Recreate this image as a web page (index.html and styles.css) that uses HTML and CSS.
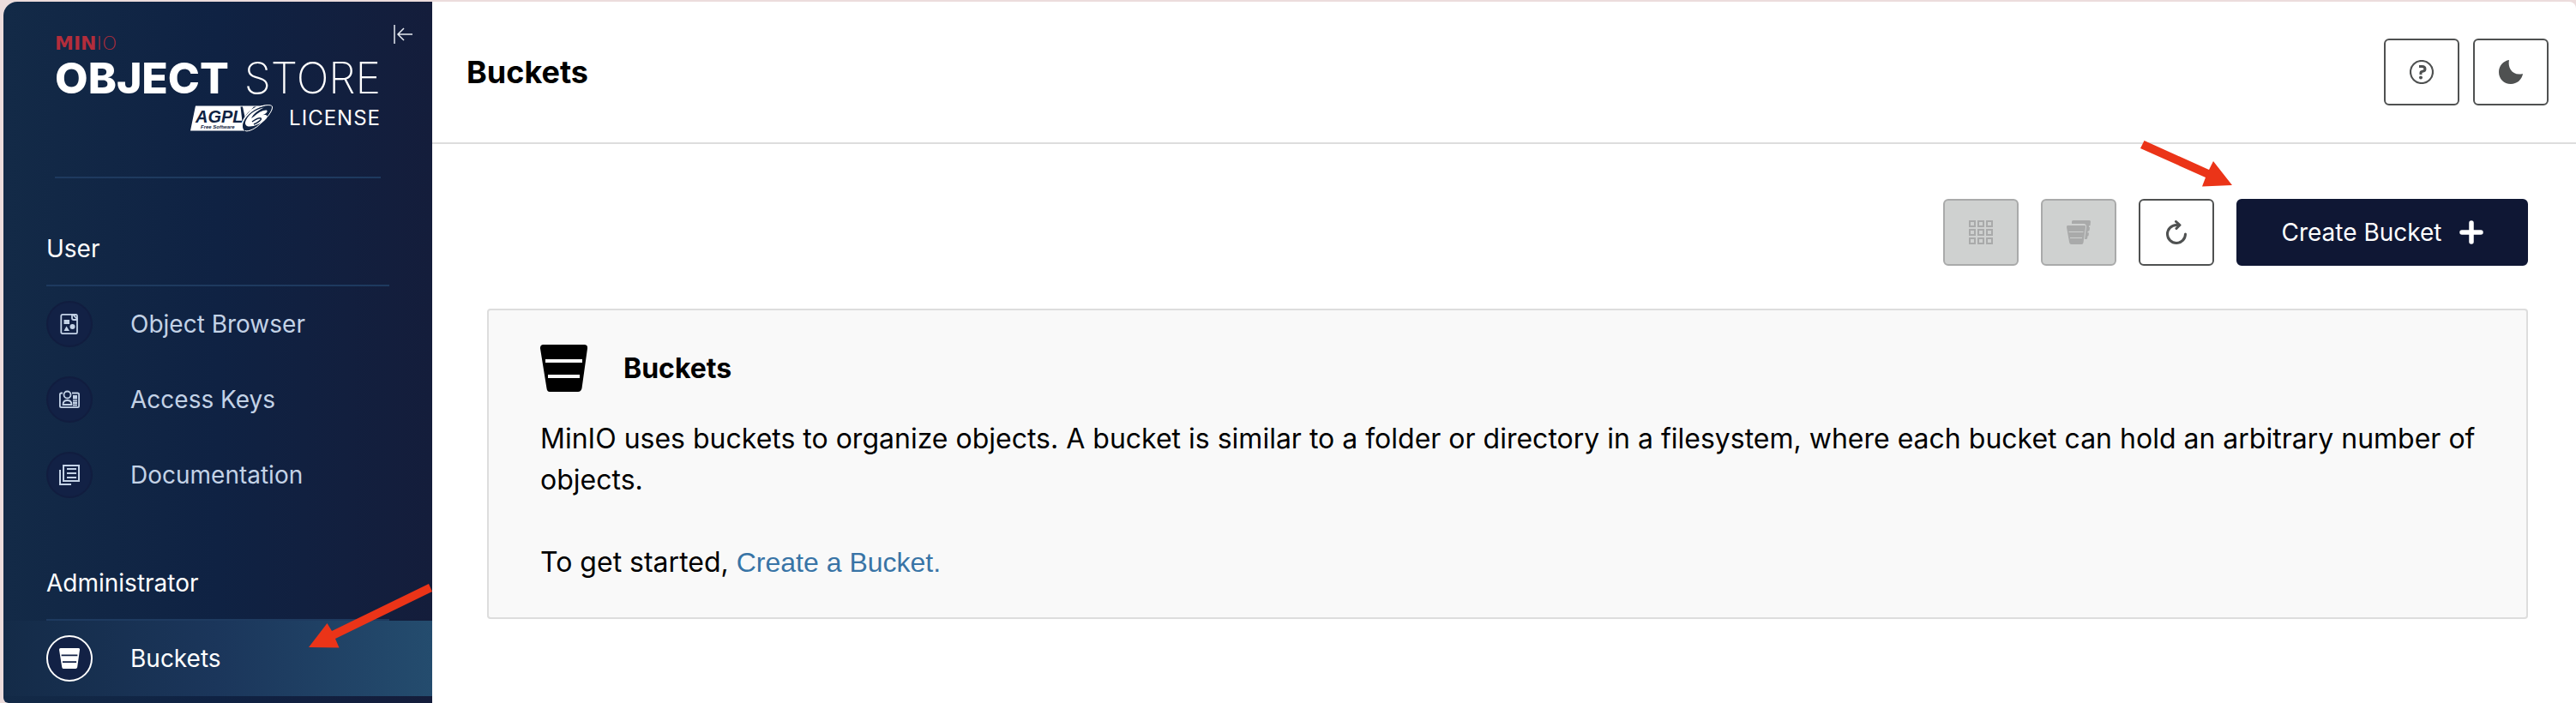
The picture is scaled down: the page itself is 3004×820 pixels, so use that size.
FILE: index.html
```html
<!DOCTYPE html>
<html lang="en">
<head>
    <meta charset="UTF-8">
    <meta name="viewport" content="width=device-width, initial-scale=1.0">
    <title>MinIO Console</title>
    <link rel="stylesheet" href="styles.css">
</head>
<body>

    <svg class="sprite" aria-hidden="true">
        <symbol id="bucket" viewBox="0 0 55 55">
            <path fill="currentColor" fill-rule="evenodd" d="M3.500 0H51.500Q55.500 0 55 4.500L48.500 51Q47.500 55 44 55H11Q8 55 7.500 51L0 4.500Q-.2 0 3.500 0ZM6 17V21H49V17ZM9 35V39H46V35Z"/>
        </symbol>
    </svg>

    <div class="window">
        <aside class="sidebar">
            <button class="collapse" aria-label="Collapse menu">
                <svg width="24" height="24" viewBox="0 0 24 24" fill="none" stroke="currentColor" stroke-width="1.500">
                    <path d="M2 1V23M23 12H6M13 5L6 12L13 19"/>
                </svg>
            </button>

            <div class="logo">
                <div class="logo-brand"><b>MIN</b>IO</div>
                <div class="logo-name"><b>OBJECT</b><span>STORE</span></div>
                <div class="logo-license">
                    <svg width="97" height="32" viewBox="0 0 97 32">
                        <path fill="#fff" d="M6 1.500H82C90 0 96 0 96 3C96 8 89 16 82 22C76 28 68 32 64 31L62 30.500H0Z"/>
                        <path fill="#102343" d="M77 2.500C70 5 63 13 60.500 20L58.500 2.500H61L63.500 14L74 2.500ZM96 3C96 8 89 16 82 22C76 28 68 32 64 31C61 29 60 25 62 20C66 11 76 4 85 2C91 0 96 0 96 3Z"/>
                        <path fill="#fff" d="M65 18C68 11 77 5 86 3.500C80 6 73 11 71 16L74 14C79 9 85 6 89 6.500C91 8 88 11 84 12.500C90 11 91 14 88 17C82 23 71 27 66 25C63 23 64 20 65 18Z"/>
                        <path fill="none" stroke="#102343" stroke-width="1.500" d="M72 20C75 18 80 15 82 16C84 17 79 21 74 23"/>
                        <path fill="none" stroke="#fff" stroke-width="1" d="M82 2C90 0 95.500 0 95.500 3C95.500 8 89 16 82 22C76 28 68 32 64 30.500"/>
                        <text class="agpl" x="6" y="21">AGPL</text>
                        <text class="agpl-sub" x="12" y="28">Free Software</text>
                    </svg>
                    <span>LICENSE</span>
                </div>
            </div>

            <nav>
                <h2 class="nav-title">User</h2>
                <a class="nav-item" href="#">
                    <span class="nav-icon">
                        <svg width="24" height="24" viewBox="0 0 24 24" fill="none" stroke="currentColor" stroke-width="1.800">
                            <path d="M4 .9H16L21 6V21.500Q21 23.100 19.500 23.100H4Q2.300 23.100 2.300 21.500V2.500Q2.300 .9 4 .9Z"/>
                            <path d="M15 1V5Q15 7 17 7H21M16 1H19.500Q21 1 21 3V7"/>
                            <path fill="currentColor" stroke="none" d="M5.500 7H12V12H5.500ZM8.500 14.500L12 20H5.500Z"/>
                            <circle cx="15.500" cy="15" r="3" fill="currentColor" stroke="none"/>
                        </svg>
                    </span>
                    Object Browser
                </a>
                <a class="nav-item" href="#">
                    <span class="nav-icon">
                        <svg width="24" height="24" viewBox="0 0 24 24" fill="none" stroke="currentColor" stroke-width="1.800">
                            <path d="M4 4.500H2.500Q.9 4.500 .9 6V19.500Q.9 21.100 2.500 21.100H21.500Q23.100 21.100 23.100 19.500V6Q23.100 4.500 21.500 4.500H15"/>
                            <circle cx="9.500" cy="6.500" r="4"/>
                            <path d="M4.500 18Q4.500 13 9.500 13Q14.500 13 14.500 18Z"/>
                            <path fill="currentColor" stroke="none" d="M16 7H21V11.500H16Z"/>
                            <path d="M16 13.500H21M16 16H21M16 18.500H21"/>
                        </svg>
                    </span>
                    Access Keys
                </a>
                <a class="nav-item" href="#">
                    <span class="nav-icon">
                        <svg width="24" height="24" viewBox="0 0 24 24" fill="none" stroke="currentColor" stroke-width="2">
                            <rect x="5" y="1" width="18" height="18"/>
                            <path d="M9 5H20M9 10H20M9 15H20M1 6V23H14"/>
                        </svg>
                    </span>
                    Documentation
                </a>

                <h2 class="nav-title">Administrator</h2>
                <a class="nav-item active" href="#">
                    <span class="nav-icon"><svg width="24" height="24"><use href="#bucket"/></svg></span>
                    Buckets
                    <svg class="arrow arrow-menu" width="144" height="76" viewBox="0 0 144 76" aria-hidden="true">
                        <path d="M140 1L144 10L31 65L35.500 75.500L0 75L21.500 47L27 56Z"/>
                    </svg>
                </a>
            </nav>
        </aside>

        <main>
            <header class="page-header">
                <h1>Buckets</h1>
                <div class="header-actions">
                    <button class="btn" aria-label="Help">
                        <svg width="28" height="28" viewBox="0 0 28 28" fill="none" stroke="currentColor">
                            <circle cx="14" cy="14" r="13" stroke-width="2.200"/>
                            <path stroke-width="3" d="M11 7.500H14.500Q18 7.500 18 10.500Q18 13 15 13.200Q13 13.500 13 15V17"/>
                            <circle cx="13" cy="20.500" r="2" fill="currentColor" stroke="none"/>
                        </svg>
                    </button>
                    <button class="btn" aria-label="Dark mode">
                        <svg width="28" height="28" viewBox="0 0 28 28" fill="currentColor">
                            <path d="M12 0C10 9 16 19 28 16C27 23 21 28 14 28C6 28 0 22 0 14C0 7 5 1 12 0Z"/>
                        </svg>
                    </button>
                </div>
            </header>

            <section class="content">
                <div class="toolbar">
                    <button class="btn" aria-label="Select all" disabled>
                        <svg width="28" height="28" viewBox="0 0 28 28" fill="none" stroke="currentColor" stroke-width="2">
                            <path d="M1 1H7V7H1ZM11 1H17V7H11ZM21 1H27V7H21ZM1 11H7V17H1ZM11 11H17V17H11ZM21 11H27V17H21ZM1 21H7V27H1ZM11 21H17V27H11ZM21 21H27V27H21Z"/>
                        </svg>
                    </button>
                    <button class="btn" aria-label="Set replication" disabled>
                        <svg width="28" height="28" viewBox="0 0 28 28" fill="currentColor">
                            <path fill-rule="evenodd" d="M1 6H21Q22.500 6 22 8L19.500 26Q19.200 28 17.500 28H5.500Q3.500 28 3.200 26L0 8Q0 6 1 6ZM2.500 13V14H19.500V13ZM4 20V21H18V20Z"/>
                            <path d="M6 1.500Q6 0 7.500 0H26.500Q28 0 28 1.500L27.500 6L26 6.500V8H27L26.500 12L24.500 13V14.500H26L25.500 18L24 19L24.500 20L23.500 22H21L23 8Q23 4 20 4H6Z"/>
                        </svg>
                    </button>
                    <button class="btn" aria-label="Refresh">
                        <svg width="28" height="28" viewBox="0 0 28 28" fill="none" stroke="currentColor" stroke-width="3" stroke-linecap="round" stroke-linejoin="round">
                            <path d="M24.500 16A10.500 10.500 0 1 1 14 5.500H17M13.500 1.500L18 5.500L14 9.500"/>
                        </svg>
                    </button>
                    <button class="btn btn-primary">
                        Create Bucket
                        <svg width="28" height="28" viewBox="0 0 28 28" fill="none" stroke="currentColor" stroke-width="5.500" stroke-linecap="round">
                            <path d="M14 3V25M3 14H25"/>
                        </svg>
                    </button>
                    <svg class="arrow arrow-create" width="108" height="56" viewBox="0 0 108 56" aria-hidden="true">
                        <path d="M4.500 1L80 35L85 25L107 53L72 54.500L76 44L0 10Z"/>
                    </svg>
                </div>

                <div class="info-box">
                    <h2><svg width="55" height="55"><use href="#bucket"/></svg>Buckets</h2>
                    <p>MinIO uses buckets to organize objects. A bucket is similar to a folder or directory in a filesystem, where each bucket can hold an arbitrary number of objects.</p>
                    <p>To get started, <a href="#">Create a Bucket.</a></p>
                </div>
            </section>
        </main>
    </div>

</body>
</html>
```
FILE: styles.css
```css
* {
    box-sizing: border-box;
}

body {
    font-family: 'Inter', 'Liberation Sans', sans-serif;
    background-color: #ecdcdc;
    margin: 0;
    padding: 2px 0 0 4px;
    color: #000;
}

h1, h2, p {
    margin: 0;
}

a {
    text-decoration: none;
}

svg {
    display: block;
    flex-shrink: 0;
}

.sprite {
    display: none;
}

.window {
    display: flex;
    min-height: calc(100vh - 2px);
    background: #fff;
    border-radius: 16px 8px 0 6px;
    overflow: hidden;
}

/* Sidebar */
.sidebar {
    position: relative;
    flex: 0 0 500px;
    padding-bottom: 8px;
    background: linear-gradient(90deg, #132a47 0%, #0f2243 50%, #141d3b 100%);
    color: #fff;
}

.collapse {
    position: absolute;
    top: 26px;
    right: 22px;
    padding: 0;
    border: none;
    background: none;
    color: #e6eaf0;
    cursor: pointer;
}

.logo {
    margin: 0 60px;
    padding-top: 36px;
    height: 206px;
    border-bottom: 2px solid #1e3a5f;
}

.logo-brand {
    font-family: 'DejaVu Sans', sans-serif;
    font-size: 22px;
    font-weight: 200;
    line-height: 26px;
    color: #b32d3b;
}

.logo-brand b {
    font-weight: 700;
}

.logo-name {
    display: flex;
    justify-content: space-between;
    font-size: 50px;
    font-weight: 200;
    line-height: 54px;
}

.logo-name b {
    font-weight: 800;
}

.logo-license {
    display: flex;
    justify-content: flex-end;
    align-items: center;
    gap: 18px;
    margin-top: 4px;
    font-size: 24px;
    line-height: 32px;
    letter-spacing: 1px;
}

.agpl {
    font-family: 'Liberation Sans', sans-serif;
    font-size: 20px;
    font-style: italic;
    font-weight: bold;
    letter-spacing: 0;
    fill: #102343;
}

.agpl-sub {
    font-family: 'Liberation Sans', sans-serif;
    font-size: 6px;
    font-style: italic;
    font-weight: bold;
    letter-spacing: 0;
    fill: #102343;
}

.nav-title {
    margin: 0 50px;
    padding: 64px 0 24px;
    border-bottom: 2px solid #1e3a5f;
    font-size: 28px;
    font-weight: 400;
    line-height: 36px;
}

.nav-item {
    position: relative;
    display: flex;
    align-items: center;
    gap: 44px;
    height: 88px;
    padding-left: 50px;
    font-size: 28px;
    color: #c3d2e6;
}

.nav-icon {
    display: flex;
    align-items: center;
    justify-content: center;
    width: 54px;
    height: 54px;
    border: 2px solid #111d3f;
    border-radius: 50%;
    background: #122145;
}

.nav-item.active {
    background: linear-gradient(90deg, #142b48 0%, #1b365b 50%, #244c6e 100%);
    color: #fff;
}

.nav-item.active .nav-icon {
    border-color: #fff;
}

/* Content */
main {
    flex: 1;
    min-width: 0;
}

.page-header {
    display: flex;
    align-items: center;
    justify-content: space-between;
    height: 166px;
    padding: 0 32px 0 40px;
    border-bottom: 2px solid #ddd;
}

h1 {
    font-size: 36px;
    font-weight: 700;
}

.header-actions {
    display: flex;
    gap: 16px;
}

.btn {
    display: flex;
    align-items: center;
    justify-content: center;
    width: 88px;
    height: 78px;
    padding: 0;
    border: 2px solid #4f5151;
    border-radius: 6px;
    background: #fff;
    color: #4f5151;
    font-family: inherit;
    font-size: 28px;
    cursor: pointer;
}

.btn:disabled {
    border-color: #a9aaaa;
    background: #cfd1d0;
    color: #a9aaaa;
    cursor: default;
}

.btn-primary {
    width: 340px;
    gap: 20px;
    border-color: #0f1734;
    background: #0f1734;
    color: #fff;
}

.content {
    padding: 64px 56px 0 64px;
}

.toolbar {
    position: relative;
    display: flex;
    justify-content: flex-end;
    gap: 26px;
    margin-bottom: 50px;
}

.info-box {
    padding: 40px 48px 40px 60px;
    border: 2px solid #ddd;
    border-radius: 4px;
    background: #f9f9f9;
    font-size: 32px;
    line-height: 48px;
}

.info-box h2 {
    display: flex;
    align-items: center;
    gap: 42px;
    margin-bottom: 31px;
    font-size: 32px;
    font-weight: 700;
}

.info-box p + p {
    margin-top: 48px;
}

.info-box a {
    color: #3874a6;
    font-family: 'Liberation Sans', sans-serif;
}

/* Pointer arrows over the page */
.arrow {
    position: absolute;
    fill: #eb3418;
}

.arrow-menu {
    right: 0;
    bottom: 56px;
}

.arrow-create {
    right: 344px;
    bottom: 91px;
}
```
